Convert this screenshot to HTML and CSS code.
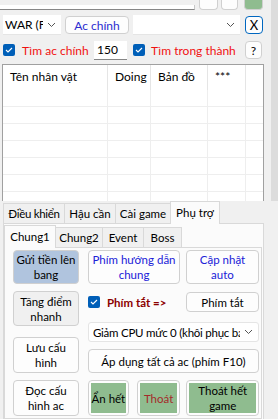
FILE: index.html
```html
<!DOCTYPE html>
<html lang="vi">
  <head>
    <meta charset="UTF-8" />
    <meta name="viewport" content="width=device-width, initial-scale=1.0" />
    <title>Auto</title>
    <link rel="stylesheet" href="styles.css">
  </head>
  <body>
    <div class="app">
      <div class="top">
        <div class="top-main">
          <div class="toprow">
            <div class="textbox"></div>
            <div class="mini-btn w19"></div>
            <div class="mini-btn w17"></div>
            <div class="mini-btn green w19"></div>
          </div>

          <div class="row2">
            <div class="combo combo-war"><span>WAR (F</span><svg class="chev" width="9" height="6" viewBox="0 0 9 6"><path d="M1 1l3.5 3.5L8 1" fill="none" stroke="#555" stroke-width="1"/></svg></div>
            <button class="btn btn-ac">Ac chính</button>
            <div class="combo combo-empty"><span></span><svg class="chev" width="9" height="6" viewBox="0 0 9 6"><path d="M1 1l3.5 3.5L8 1" fill="none" stroke="#555" stroke-width="1"/></svg></div>
            <button class="btn btn-x">X</button>
          </div>

          <div class="row3">
            <span class="check"><svg width="8" height="6" viewBox="0 0 8 6"><path d="M1 3l2 2 4-4" fill="none" stroke="#fff" stroke-width="1.1"/></svg></span>
            <span class="red-label lbl-main">Tìm ac chính</span>
            <div class="numbox">150</div>
            <span class="check"><svg width="8" height="6" viewBox="0 0 8 6"><path d="M1 3l2 2 4-4" fill="none" stroke="#fff" stroke-width="1.1"/></svg></span>
            <span class="red-label lbl-city">Tìm trong thành</span>
            <button class="btn btn-q">?</button>
          </div>

          <div class="list">
            <div class="list-head">
              <div class="col c1">Tên nhân vật</div>
              <div class="col c2">Doing</div>
              <div class="col c3">Bản đồ</div>
              <div class="col c4">***</div>
              <div class="col c5"></div>
            </div>
            <div class="list-body">
              <div class="grid-row"><div class="cell c1"></div><div class="cell c2"></div><div class="cell c3"></div><div class="cell c4"></div><div class="cell c5"></div></div>
              <div class="grid-row"><div class="cell c1"></div><div class="cell c2"></div><div class="cell c3"></div><div class="cell c4"></div><div class="cell c5"></div></div>
              <div class="grid-row"><div class="cell c1"></div><div class="cell c2"></div><div class="cell c3"></div><div class="cell c4"></div><div class="cell c5"></div></div>
              <div class="grid-row"><div class="cell c1"></div><div class="cell c2"></div><div class="cell c3"></div><div class="cell c4"></div><div class="cell c5"></div></div>
              <div class="grid-row"><div class="cell c1"></div><div class="cell c2"></div><div class="cell c3"></div><div class="cell c4"></div><div class="cell c5"></div></div>
              <div class="grid-row"><div class="cell c1"></div><div class="cell c2"></div><div class="cell c3"></div><div class="cell c4"></div><div class="cell c5"></div></div>
              <div class="grid-row"><div class="cell c1"></div><div class="cell c2"></div><div class="cell c3"></div><div class="cell c4"></div><div class="cell c5"></div></div>
            </div>
          </div>
        </div>
        <div class="side-strip"></div>
      </div>

      <div class="tabs">
        <div class="tab-strip">
          <div class="tab t61">Điều khiển</div>
          <div class="tab t52">Hậu cần</div>
          <div class="tab t56">Cài game</div>
          <div class="tab active t50">Phụ trợ</div>
        </div>
        <div class="tab-page">
          <div class="tab-strip inner">
            <div class="tab active t52">Chung1</div>
            <div class="tab t48">Chung2</div>
            <div class="tab t42">Event</div>
            <div class="tab t39">Boss</div>
          </div>
          <div class="inner-page">
            <div class="left-col">
              <button class="btn big steel">Gửi tiền lên<br>bang</button>
              <button class="btn big gray">Tăng điểm<br>nhanh</button>
              <button class="btn big tall">Lưu cấu<br>hình</button>
              <button class="btn big tall">Đọc cấu<br>hình ac</button>
            </div>
            <div class="right-col">
              <div class="r-row1">
                <button class="btn big blue-text w92">Phím hướng dẫn<br>chung</button>
                <button class="btn big blue-text w73">Cập nhật<br>auto</button>
              </div>
              <div class="r-row2">
                <span class="check"><svg width="8" height="6" viewBox="0 0 8 6"><path d="M1 3l2 2 4-4" fill="none" stroke="#fff" stroke-width="1.1"/></svg></span>
                <span class="hotkey-label">Phím tắt =&gt;</span>
                <button class="btn small w73">Phím tắt</button>
              </div>
              <div class="combo combo-cpu"><span>Giảm CPU mức 0 (khôi phục ba</span><svg class="chev" width="9" height="6" viewBox="0 0 9 6"><path d="M1 1l3.5 3.5L8 1" fill="none" stroke="#555" stroke-width="1"/></svg></div>
              <button class="btn apply">Áp dụng tất cả ac (phím F10)</button>
              <div class="r-row5">
                <button class="btn gbtn w41"><span class="gfill">Ẩn hết</span></button>
                <button class="btn gbtn w44"><span class="gfill exit">Thoát</span></button>
                <button class="btn gbtn w73"><span class="gfill">Thoát hết<br>game</span></button>
              </div>
            </div>
          </div>
        </div>
      </div>
    </div>
  </body>
</html>
```

FILE: styles.css
```css
* {
  margin: 0;
  padding: 0;
  box-sizing: border-box;
  font-family: Lato, "Segoe UI", sans-serif;
}
body {
  background-color: #f0f0f0;
  font-size: 12px;
  color: #000;
}
.app {
  width: 278px;
  height: 419px;
  overflow: hidden;
}
.top {
  display: flex;
  height: 201px;
}
.top-main {
  width: 271px;
}
.side-strip {
  width: 7px;
  background-color: #dcdcdc;
}
button {
  font-size: 12px;
  color: #000;
}
.btn {
  background-color: #fdfdfd;
  border: 1px solid #d0d0d0;
  border-radius: 4px;
  display: flex;
  align-items: center;
  justify-content: center;
  text-align: center;
  line-height: 15px;
  white-space: nowrap;
}

/* top row (cut off) */
.toprow {
  display: flex;
  align-items: flex-end;
  height: 10px;
}
.textbox {
  width: 195px;
  height: 5px;
  background-color: #fff;
  border-right: 1px solid #c8c8c8;
  border-bottom: 1px solid #868686;
}
.mini-btn {
  height: 10px;
  background-color: #fdfdfd;
  border: 1px solid #d0d0d0;
  border-top: none;
  border-radius: 0 0 4px 4px;
  margin-left: 4px;
}
.mini-btn.w19 { width: 19px; }
.mini-btn.w17 { width: 17px; margin-left: 3px; }
.mini-btn.green {
  background-color: #8fbc8f;
  margin-left: 6px;
}

/* combo boxes */
.combo {
  display: flex;
  align-items: center;
  justify-content: space-between;
  height: 20px;
  background-color: #fff;
  border-bottom: 1px solid #e5e5e5;
  padding: 0 5px 0 4px;
  white-space: nowrap;
  overflow: hidden;
}
.combo span {
  overflow: hidden;
}
.chev {
  flex-shrink: 0;
  margin-left: 4px;
}

.row2 {
  display: flex;
  align-items: center;
  margin-top: 5px;
  margin-left: 3px;
  height: 20px;
}
.combo-war {
  width: 58px;
  padding-left: 2px;
}
.btn-ac {
  width: 64px;
  height: 18px;
  margin-left: 4px;
  color: #2b2bd0;
}
.combo-empty {
  width: 107px;
  margin-left: 4px;
}
.btn-x {
  width: 18px;
  height: 18px;
  margin-left: 5px;
  border-color: #0067c0;
  font-size: 13px;
}

/* filter row */
.row3 {
  display: flex;
  align-items: center;
  margin-top: 5px;
  margin-left: 3px;
  height: 20px;
}
.check {
  width: 12px;
  height: 12px;
  border-radius: 2px;
  background-color: #005fb8;
  display: flex;
  align-items: center;
  justify-content: center;
  flex-shrink: 0;
}
.red-label {
  color: #f01010;
  white-space: nowrap;
}
.lbl-main {
  margin-left: 7px;
  width: 72px;
}
.numbox {
  width: 33px;
  height: 19px;
  background-color: #fff;
  border-bottom: 1px solid #868686;
  padding-left: 3px;
  line-height: 18px;
}
.row3 .check + .lbl-city {
  margin-left: 6px;
  width: 94px;
}
.numbox + .check {
  margin-left: 6px;
}
.btn-q {
  width: 17px;
  height: 18px;
  font-size: 12px;
}

/* list view */
.list {
  margin-top: 4px;
  margin-left: 2px;
  width: 262px;
  height: 137px;
  background-color: #fff;
  border: 1px solid #a0a0a0;
  border-bottom: none;
  overflow: hidden;
}
.list-head {
  display: flex;
  height: 25px;
}
.list-head .col {
  border-right: 1px solid #e5e5e5;
  padding-left: 7px;
  line-height: 24px;
  white-space: nowrap;
}
.c1 { width: 105px; }
.c2 { width: 43px; }
.c3 { width: 57px; }
.c4 { width: 38px; }
.c5 { flex: 1; }
.list-head .c5 { border-right: none; }
.grid-row {
  display: flex;
  height: 17px;
  border-bottom: 1px solid #eeeeee;
}
.grid-row .cell {
  border-right: 1px solid #eeeeee;
}
.grid-row .c5 {
  border-right: none;
}

/* tab control */
.tabs {
  padding-left: 3px;
}
.tabs,
.tabs button {
  font-size: 11.5px;
}
.tab-strip {
  display: flex;
  align-items: flex-end;
  height: 22px;
}
.tab {
  height: 20px;
  line-height: 19px;
  text-align: center;
  background-color: #f0f0f0;
  border: 1px solid #d9d9d9;
  border-bottom: none;
  margin-right: -1px;
  white-space: nowrap;
  overflow: hidden;
}
.tab.t61 {
  letter-spacing: -0.3px;
}
.tab.active {
  height: 23px;
  line-height: 21px;
  background-color: #fbfbfb;
  margin-bottom: -1px;
  position: relative;
  z-index: 1;
}
.t61 { width: 62px; }
.t56 { width: 56px; }
.t52 { width: 52px; }
.t50 { width: 50px; }
.t48 { width: 48px; }
.t42 { width: 42px; }
.t39 { width: 39px; }
.tab-page {
  width: 261px;
  height: 197px;
  background-color: #fbfbfb;
  border: 1px solid #d9d9d9;
  padding: 1px 1px 0 0;
}
.tab-strip.inner {
  height: 22px;
}
.inner-page {
  display: flex;
  height: 172px;
  border: 1px solid #d9d9d9;
  background-color: #fbfbfb;
  padding: 2px 0 0 8px;
}

.left-col {
  display: flex;
  flex-direction: column;
  width: 66px;
}
.big {
  height: 34px;
}
.left-col .btn {
  width: 66px;
}
.steel {
  background-color: #b0c4de;
}
.gray {
  background-color: #f0f0f0;
  margin-top: 7px;
  height: 35px;
}
.tall {
  height: 36px;
  margin-top: 11px;
}
.tall + .tall {
  margin-top: 7px;
}

.right-col {
  display: flex;
  flex-direction: column;
  width: 171px;
  margin-left: 9px;
}
.r-row1 {
  display: flex;
  justify-content: space-between;
}
.blue-text {
  color: #2020d8;
}
.w92 { width: 92px; }
.w73 { width: 73px; }
.w41 { width: 41px; }
.w44 { width: 44px; }
.r-row2 {
  display: flex;
  align-items: center;
  margin-top: 8px;
  height: 20px;
}
.hotkey-label {
  color: #8b0000;
  font-weight: bold;
  margin-left: 7px;
  width: 79px;
  white-space: nowrap;
}
.small {
  height: 20px;
}
.combo-cpu {
  margin-top: 10px;
  width: 171px;
  border: 1px solid #e5e5e5;
  border-radius: 3px;
}
.combo-cpu span {
  letter-spacing: -0.25px;
}
.apply {
  margin-top: 7px;
  height: 24px;
  width: 171px;
}
.r-row5 {
  display: flex;
  margin-top: 7px;
  gap: 6px;
}
.gbtn {
  height: 36px;
  padding: 2px;
  background-color: #fdfdfd;
}
.w44 { margin-left: 2px; }
.gfill {
  display: flex;
  align-items: center;
  justify-content: center;
  width: 100%;
  height: 100%;
  background-color: #8fbc8f;
  line-height: 15px;
  white-space: nowrap;
}
.gfill.exit {
  color: #a52a2a;
}
```
